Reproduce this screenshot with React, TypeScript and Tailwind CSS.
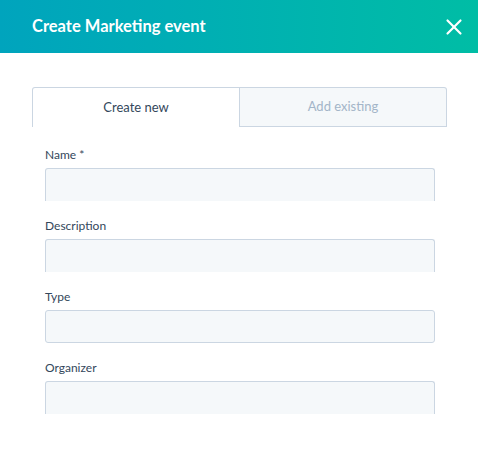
import { X } from 'lucide-react';

const fields = [
  { label: 'Name *', open: true },
  { label: 'Description', open: true },
  { label: 'Type', open: false },
  { label: 'Organizer', open: true },
];

export default function App() {
  return (
    <div className="w-[478px] h-[450px] bg-white overflow-hidden font-['Lato',sans-serif] text-[#33475b]">
      {/* Header */}
      <div className="h-[53px] flex items-center justify-between pl-8 pr-[11px] bg-gradient-to-r from-[#00a4bd] to-[#00bda5]">
        <h1 className="text-[16.5px] font-bold text-white">Create Marketing event</h1>
        <X className="w-[26px] h-[26px] text-white" strokeWidth={2} />
      </div>

      <div className="pl-8 pr-[31px] pt-[34px]">
        {/* Tabs */}
        <div className="flex h-[40px]">
          <div className="flex-1 flex items-center justify-center border border-b-0 border-[#cbd6e2] rounded-tl-[3px] text-[13px] text-[#33475b] bg-white">
            Create new
          </div>
          <div className="flex-1 flex items-center justify-center border border-l-0 border-[#cbd6e2] rounded-tr-[3px] bg-[#f5f8fa] text-[13px] text-[#a3b5c8]">
            Add existing
          </div>
        </div>

        {/* Form */}
        <div className="pl-[13px] pr-[12px] pt-[18px] flex flex-col gap-[15px]">
          {fields.map((f) => (
            <div key={f.label}>
              <div className="h-[20px] flex items-center text-[12px] text-[#33475b]">{f.label}</div>
              <div
                className={`mt-[3px] h-[33px] bg-[#f5f8fa] border border-[#cbd6e2] rounded-[3px] ${
                  f.open ? 'border-b-0 rounded-b-none' : ''
                }`}
              />
            </div>
          ))}
        </div>
      </div>
    </div>
  );
}
